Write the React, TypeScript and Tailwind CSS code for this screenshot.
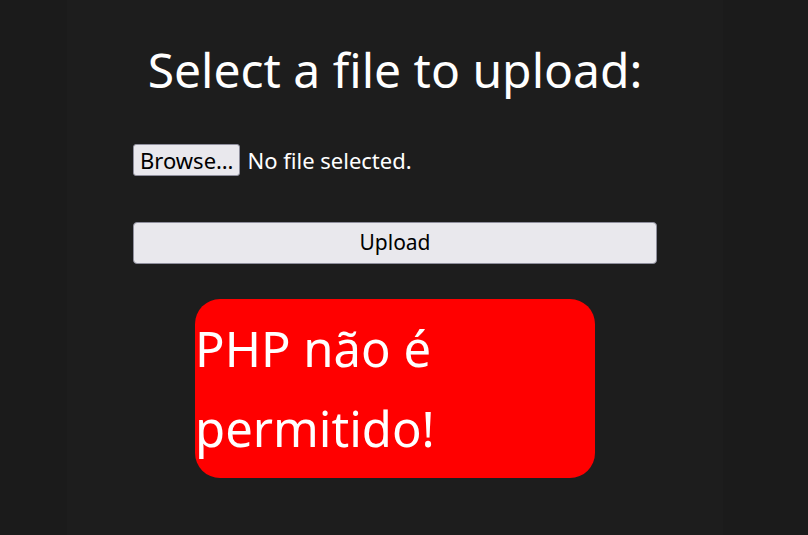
const App = () => {
  return (
    <div className="min-h-screen bg-[#1b1b1b] flex font-['Noto_Sans',sans-serif]">
      <div className="w-[656px] min-h-screen ml-[67px] bg-[#1d1d1d] flex flex-col items-center">
        <h1 className="mt-[40px] text-[48px] text-white leading-[60px]">Select a file to upload:</h1>

        <form className="w-[524px] flex flex-col">
          <div className="mt-[44px] flex items-center gap-[7px]">
            <button
              type="button"
              className="h-[32px] px-[6px] bg-[#e9e8ed] border border-[#8f8f9d] rounded-[3px] text-[22px] text-black leading-none"
            >
              Browse…
            </button>
            <span className="text-[22px] leading-[32px] text-white">No file selected.</span>
          </div>

          <button
            type="button"
            className="mt-[46px] h-[42px] w-full bg-[#e9e8ed] border border-[#8f8f9d] rounded-[4px] text-[21px] text-black"
          >
            Upload
          </button>
        </form>

        <div className="mt-[35px] w-[400px] h-[179px] py-[9px] bg-[#ff0000] rounded-[25px]">
          <p className="text-[49px] leading-[80px] text-white">PHP não é permitido!</p>
        </div>
      </div>
    </div>
  )
}

export default App
